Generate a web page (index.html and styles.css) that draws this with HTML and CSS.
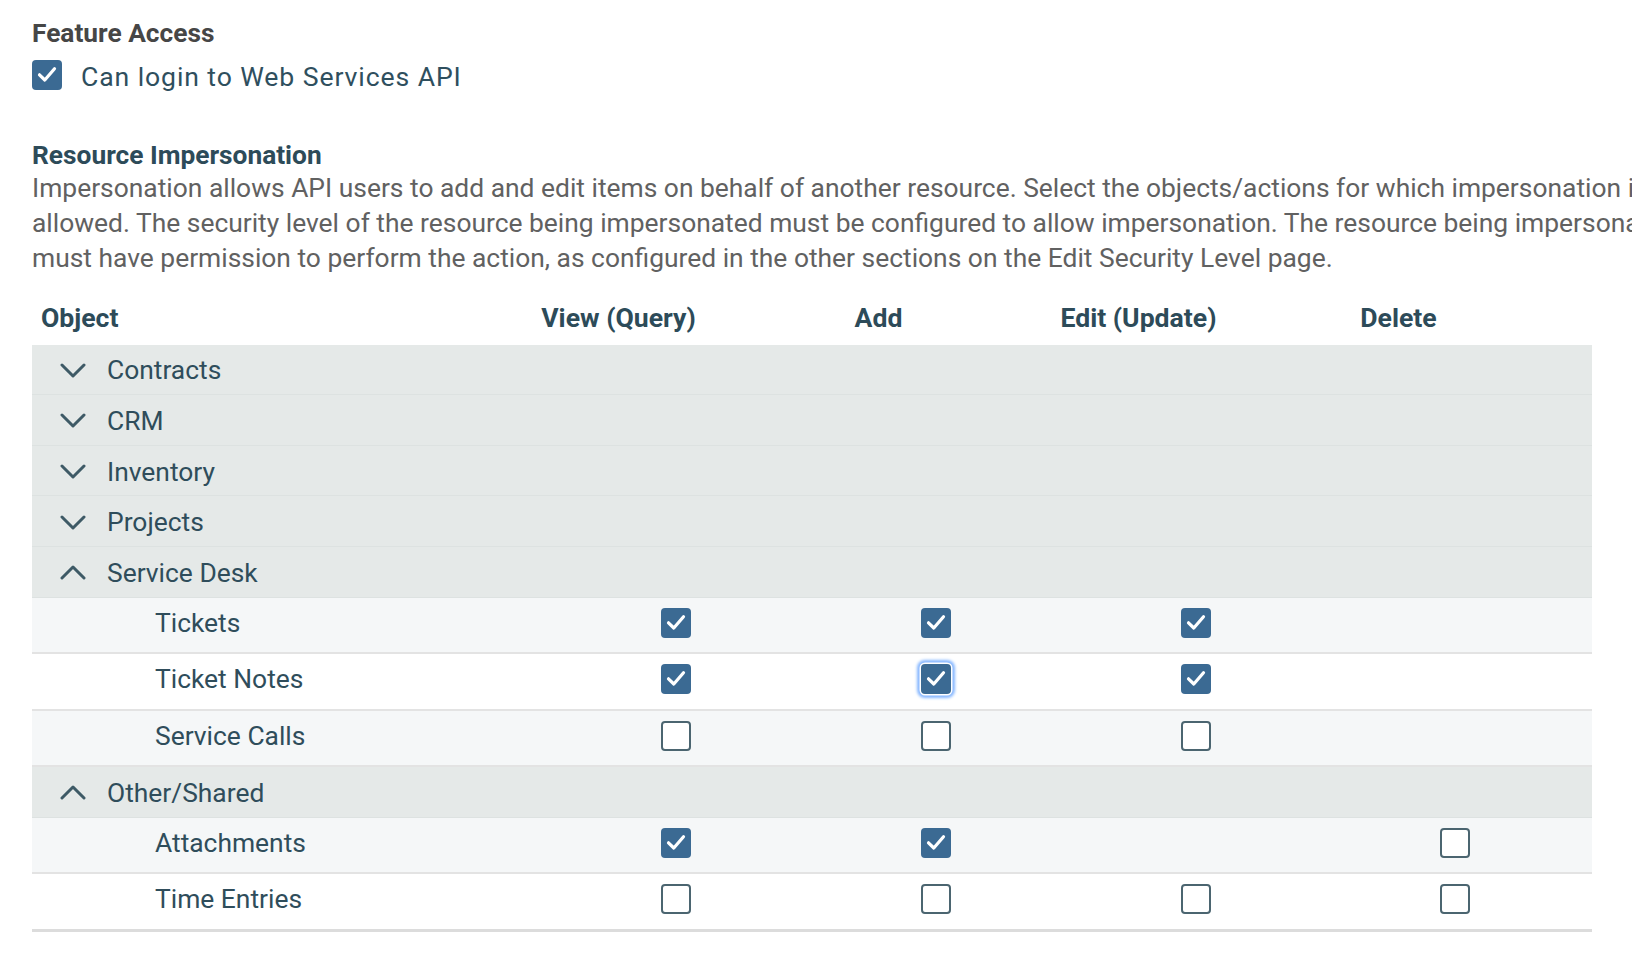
FILE: index.html
```html
<!DOCTYPE html>
<html lang="en">
<head>
<meta charset="utf-8">
<title>Edit Security Level</title>
<link rel="stylesheet" href="styles.css">
</head>
<body>
<div class="page">
  <h2 class="section-title">Feature Access</h2>
  <label class="check-row">
    <span class="cb checked"><svg viewBox="0 0 30 30"><path d="M7.5 14.8 L12.8 20 L22.5 8.8"/></svg></span>
    <span class="check-label">Can login to Web Services API</span>
  </label>

  <h2 class="section-title teal">Resource Impersonation</h2>
  <p class="desc">Impersonation allows API users to add and edit items on behalf of another resource. Select the objects/actions for which impersonation is<br>allowed. The security level of the resource being impersonated must be configured to allow impersonation. The resource being impersonated<br>must have permission to perform the action, as configured in the other sections on the Edit Security Level page.</p>

  <div class="perm-table">
    <div class="thead">
      <div class="th th-obj">Object</div>
      <div class="th">View (Query)</div>
      <div class="th">Add</div>
      <div class="th">Edit (Update)</div>
      <div class="th">Delete</div>
    </div>

    <div class="group-row"><svg class="chev" viewBox="0 0 26 15"><path d="M2 2 L13 13 L24 2"/></svg><span class="group-name">Contracts</span></div>
    <div class="group-row"><svg class="chev" viewBox="0 0 26 15"><path d="M2 2 L13 13 L24 2"/></svg><span class="group-name">CRM</span></div>
    <div class="group-row"><svg class="chev" viewBox="0 0 26 15"><path d="M2 2 L13 13 L24 2"/></svg><span class="group-name">Inventory</span></div>
    <div class="group-row"><svg class="chev" viewBox="0 0 26 15"><path d="M2 2 L13 13 L24 2"/></svg><span class="group-name">Projects</span></div>
    <div class="group-row"><svg class="chev" viewBox="0 0 26 15"><path d="M2 13 L13 2 L24 13"/></svg><span class="group-name">Service Desk</span></div>

    <div class="item-row light">
      <div class="item-name">Tickets</div>
      <div class="cell"><span class="cb checked"><svg viewBox="0 0 30 30"><path d="M7.5 14.8 L12.8 20 L22.5 8.8"/></svg></span></div>
      <div class="cell"><span class="cb checked"><svg viewBox="0 0 30 30"><path d="M7.5 14.8 L12.8 20 L22.5 8.8"/></svg></span></div>
      <div class="cell"><span class="cb checked"><svg viewBox="0 0 30 30"><path d="M7.5 14.8 L12.8 20 L22.5 8.8"/></svg></span></div>
      <div class="cell"></div>
    </div>
    <div class="item-row">
      <div class="item-name">Ticket Notes</div>
      <div class="cell"><span class="cb checked"><svg viewBox="0 0 30 30"><path d="M7.5 14.8 L12.8 20 L22.5 8.8"/></svg></span></div>
      <div class="cell"><span class="cb checked focus"><svg viewBox="0 0 30 30"><path d="M7.5 14.8 L12.8 20 L22.5 8.8"/></svg></span></div>
      <div class="cell"><span class="cb checked"><svg viewBox="0 0 30 30"><path d="M7.5 14.8 L12.8 20 L22.5 8.8"/></svg></span></div>
      <div class="cell"></div>
    </div>
    <div class="item-row light">
      <div class="item-name">Service Calls</div>
      <div class="cell"><span class="cb"></span></div>
      <div class="cell"><span class="cb"></span></div>
      <div class="cell"><span class="cb"></span></div>
      <div class="cell"></div>
    </div>

    <div class="group-row"><svg class="chev" viewBox="0 0 26 15"><path d="M2 13 L13 2 L24 13"/></svg><span class="group-name">Other/Shared</span></div>

    <div class="item-row light">
      <div class="item-name">Attachments</div>
      <div class="cell"><span class="cb checked"><svg viewBox="0 0 30 30"><path d="M7.5 14.8 L12.8 20 L22.5 8.8"/></svg></span></div>
      <div class="cell"><span class="cb checked"><svg viewBox="0 0 30 30"><path d="M7.5 14.8 L12.8 20 L22.5 8.8"/></svg></span></div>
      <div class="cell"></div>
      <div class="cell"><span class="cb"></span></div>
    </div>
    <div class="item-row last">
      <div class="item-name">Time Entries</div>
      <div class="cell"><span class="cb"></span></div>
      <div class="cell"><span class="cb"></span></div>
      <div class="cell"><span class="cb"></span></div>
      <div class="cell"><span class="cb"></span></div>
    </div>
  </div>
</div>
</body>
</html>
```

FILE: styles.css
```css
html, body {
  margin: 0;
  padding: 0;
  overflow: hidden;
  background: #ffffff;
}

body {
  font-family: Roboto, "Liberation Sans", Arial, sans-serif;
  color: #2f4d5b;
}

.page {
  padding: 17px 0 0 32px;
}

.section-title {
  margin: 0;
  font-size: 26.3px;
  line-height: 32px;
  font-weight: 700;
  color: #464646;
}

.section-title.teal {
  margin-top: 48px;
  color: #2d4b59;
}

.check-row {
  display: flex;
  align-items: center;
  gap: 19px;
  height: 32px;
  margin-top: 10px;
}

.check-label {
  font-size: 26.6px;
  line-height: 32px;
  letter-spacing: 0.9px;
  color: #2f4f5e;
  padding-top: 3px;
}

.desc {
  margin: 0;
  font-size: 26.4px;
  line-height: 35px;
  color: #616161;
  white-space: nowrap;
}

/* checkbox */
.cb {
  box-sizing: border-box;
  width: 30px;
  height: 30px;
  border: 2px solid #4b6570;
  border-radius: 4px;
  background: #ffffff;
  display: inline-block;
  flex: none;
}

.cb.checked {
  border: none;
  background: #3b6a93;
}

.cb svg {
  display: block;
  width: 30px;
  height: 30px;
}

.cb svg path {
  fill: none;
  stroke: #ffffff;
  stroke-width: 3.2;
  stroke-linecap: round;
  stroke-linejoin: round;
}

.cb.focus {
  box-shadow: 0 0 0 1.5px #ffffff, 0 0 3px 4px #86b7ff;
}

/* table */
.perm-table {
  width: 1560px;
}

.thead {
  display: grid;
  grid-template-columns: 456.5px 260px 260px 260px 260px 1fr;
  padding: 25.6px 0 11px;
}

.th {
  font-size: 26.6px;
  line-height: 32px;
  font-weight: 700;
  color: #2d4b59;
  text-align: center;
}

.th-obj {
  text-align: left;
  padding-left: 9px;
}

.group-row {
  box-sizing: border-box;
  height: 50.6px;
  display: flex;
  align-items: center;
  gap: 21px;
  padding: 2px 0 0 28px;
  background: #e5e9e8;
  border-bottom: 1px solid #dde2e1;
}

.chev {
  width: 26px;
  height: 15px;
  flex: none;
}

.chev path {
  fill: none;
  stroke: #3e5a66;
  stroke-width: 3;
  stroke-linecap: round;
  stroke-linejoin: round;
}

.group-name,
.item-name {
  font-size: 26.4px;
  line-height: 32px;
  color: #2f4d5b;
}

.item-row {
  box-sizing: border-box;
  height: 56.5px;
  display: grid;
  grid-template-columns: 514px 260px 260px 260px 257px 1fr;
  align-items: center;
  padding-bottom: 4px;
  background: #ffffff;
  border-bottom: 2px solid #e3e3e3;
}

.item-row.light {
  background: #f5f7f8;
}

.item-row.last {
  height: 57.5px;
  border-bottom: 3px solid #dcdcdc;
}

.item-name {
  padding-left: 123px;
}

.cell {
  display: flex;
  justify-content: center;
  align-items: center;
}
```
